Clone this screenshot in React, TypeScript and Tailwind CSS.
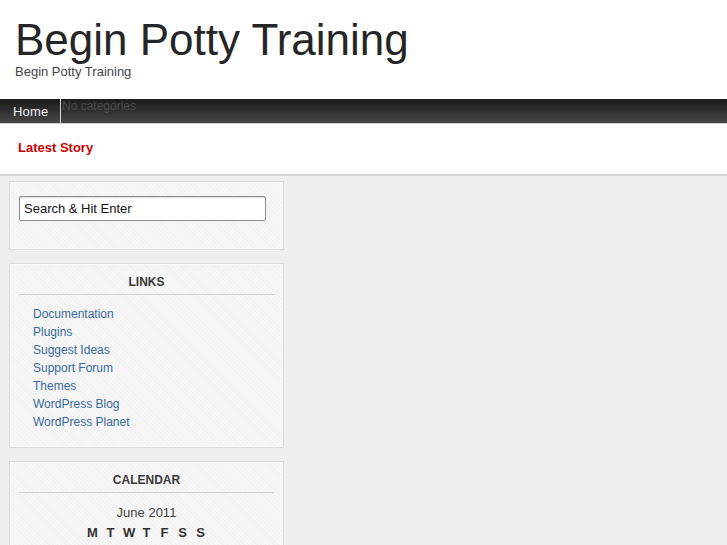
import React from "react";

const links = [
  "Documentation",
  "Plugins",
  "Suggest Ideas",
  "Support Forum",
  "Themes",
  "WordPress Blog",
  "WordPress Planet",
];

const days = ["M", "T", "W", "T", "F", "S", "S"];

const boxClass =
  "w-[275px] border border-[#dcdcdc] bg-[#f4f4f4] bg-[image:repeating-linear-gradient(45deg,#f6f6f6_0px,#f6f6f6_2px,#f1f1f1_2px,#f1f1f1_3px)] shadow-[inset_0_0_0_1px_#f9f9f9]";

function WidgetTitle({ children }: { children: React.ReactNode }) {
  return (
    <div className="mx-[9px] border-b border-[#d4d4d4] pt-[11px] pb-[5px] text-center text-[12px] font-bold leading-[14px] text-[#3a3a3a]">
      {children}
    </div>
  );
}

export default function App() {
  return (
    <div className="min-h-[545px] bg-[#eeeeee] font-['Liberation_Sans',Arial,sans-serif]">
      <header className="bg-white pl-[15px] pt-[18px] pb-[20px]">
        <h1 className="text-[44px] leading-[44px] text-[#262626]">Begin Potty Training</h1>
        <p className="mt-[2px] text-[13px] leading-[15px] text-[#444]">Begin Potty Training</p>
      </header>

      <nav className="relative flex h-[25px] border-b border-[#cfcfcf] bg-[linear-gradient(#1c1c1c,#2e2e2e_45%,#474747)]">
        <a className="flex h-full w-[60px] items-end pb-[4px] pl-[13px] text-[13px] leading-[15px] tracking-[0.2px] text-[#f0f0f0]">
          Home
        </a>
        <div className="h-full w-px bg-[#d8d8d8]" />
        <div className="pl-[1px] pt-[1px] text-[12px] leading-[12px] text-[#4a4a4a]">No categories</div>
      </nav>

      <div className="h-[52px] border-b-2 border-[#d6d6d6] bg-white pl-[18px] pt-[11px]">
        <span className="text-[13px] font-bold leading-[15px] text-[#cc0000]">Latest Story</span>
      </div>

      <aside className="flex flex-col gap-[13px] pl-[9px] pt-[5px]">
        <div className={`${boxClass} h-[69px] pl-[9px] pt-[14px]`}>
          <input
            className="h-[25px] w-[247px] rounded-[2px] border border-[#8c8c8c] bg-white px-[4px] text-[13px] text-[#111] shadow-[inset_0_1px_1px_#ddd] outline-none"
            defaultValue="Search & Hit Enter"
          />
        </div>

        <div className={`${boxClass} h-[185px]`}>
          <WidgetTitle>LINKS</WidgetTitle>
          <ul className="flex flex-col pt-[10px] pl-[23px]">
            {links.map((l) => (
              <li key={l} className="h-[18px] text-[12px] leading-[18px] text-[#3a6a9c]">
                {l}
              </li>
            ))}
          </ul>
        </div>

        <div className={`${boxClass} h-[100px]`}>
          <WidgetTitle>CALENDAR</WidgetTitle>
          <div className="pt-[12px] text-center text-[13px] leading-[16px] text-[#444]">June 2011</div>
          <div className="mt-[4px] flex justify-center gap-[7px] text-[13px] font-bold leading-[16px] text-[#333]">
            {days.map((d, i) => (
              <span key={i} className="w-[11px] text-center">
                {d}
              </span>
            ))}
          </div>
        </div>
      </aside>
    </div>
  );
}
